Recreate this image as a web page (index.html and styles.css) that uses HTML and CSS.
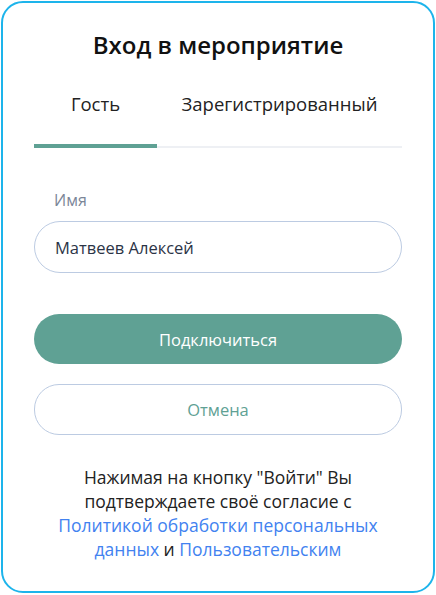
FILE: index.html
```html
<!DOCTYPE html>
<html lang="ru">
<head>
<meta charset="utf-8">
<title>Вход в мероприятие</title>
<link rel="stylesheet" href="styles.css">
</head>
<body>
<div class="card">
  <h1 class="title">Вход в мероприятие</h1>
  <div class="tabs">
    <div class="tab tab-active">Гость</div>
    <div class="tab">Зарегистрированный</div>
  </div>
  <label class="label" for="name">Имя</label>
  <div class="input">Матвеев Алексей</div>
  <button class="btn btn-primary">Подключиться</button>
  <button class="btn btn-outline">Отмена</button>
  <p class="note">Нажимая на кнопку "Войти" Вы подтверждаете своё согласие с <a class="link">Политикой обработки персональных данных</a> и <a class="link">Пользовательским</a></p>
</div>
</body>
</html>
```

FILE: styles.css
```css
* { box-sizing: border-box; }
html, body { margin: 0; padding: 0; background: #ffffff; }
body { font-family: "Open Sans", "Noto Sans", sans-serif; }
.card {
  margin: 1px;
  width: 434px;
  height: 592px;
  border: 2px solid #1db4eb;
  border-radius: 22px;
  padding: 27px 31px 0;
  display: flex;
  flex-direction: column;
  overflow: hidden;
}
.title {
  margin: 0;
  font-size: 24px;
  line-height: 30px;
  font-weight: 600;
  color: #111111;
  text-align: center;
}
.tabs {
  margin-top: 32px;
  display: grid;
  grid-template-columns: 123px 1fr;
  border-bottom: 2px solid #eef0f4;
}
.tab {
  font-size: 18.5px;
  line-height: 24px;
  color: #222222;
  text-align: center;
  padding-bottom: 28px;
}
.tab-active {
  border-bottom: 4px solid #5fa194;
  margin-bottom: -2px;
}
.label {
  display: block;
  margin-top: 41px;
  padding-left: 20px;
  font-size: 16px;
  line-height: 22px;
  color: #7b8698;
}
.input {
  margin-top: 10px;
  height: 52px;
  border: 1px solid #bccbe2;
  border-radius: 26px;
  padding: 0 20px;
  display: flex;
  align-items: center;
  font-size: 16.5px;
  color: #2b3446;
}
.btn {
  display: block;
  width: 100%;
  height: 50px;
  border-radius: 25px;
  font-family: inherit;
  font-size: 16.5px;
}
.btn-primary {
  margin-top: 41px;
  background: #5fa194;
  border: none;
  color: #ffffff;
}
.btn-outline {
  margin-top: 20px;
  height: 51px;
  background: #ffffff;
  border: 1px solid #bccbe2;
  color: #5fa194;
}
.note {
  margin: 30px auto 0;
  width: 332px;
  text-align: center;
  font-size: 17.5px;
  line-height: 24px;
  color: #222222;
}
.link { color: #4282f0; }
```
